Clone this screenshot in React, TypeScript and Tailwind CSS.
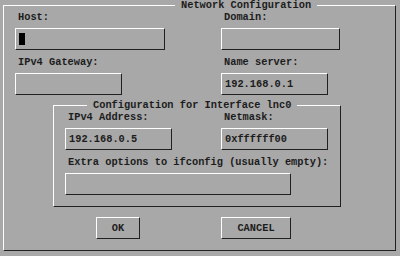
const mono = { fontFamily: '"Liberation Mono", "DejaVu Sans Mono", monospace' };

function Input({ width, value, cursor }: { width: string; value?: string; cursor?: boolean }) {
  return (
    <div
      className={[
        "flex h-[22px] items-center border border-t-white border-l-white border-r-[#202020] border-b-[#202020] pl-[3px]",
        width,
      ].join(" ")}
    >
      {cursor ? <span className="block h-[12px] w-[6px] bg-black" /> : value}
    </div>
  );
}

function Field({
  label,
  width,
  value,
  cursor,
}: {
  label: string;
  width: string;
  value?: string;
  cursor?: boolean;
}) {
  return (
    <div className="flex flex-col gap-[6px]">
      <div className="h-[10px] pl-[3px]">{label}</div>
      <Input width={width} value={value} cursor={cursor} />
    </div>
  );
}

function Button({ label, width }: { label: string; width: string }) {
  return (
    <button
      className={[
        "flex h-[22px] items-center justify-center border border-t-white border-l-white border-r-[#202020] border-b-[#202020]",
        width,
      ].join(" ")}
    >
      {label}
    </button>
  );
}

export default function App() {
  return (
    <div
      style={mono}
      className="h-[256px] w-[400px] overflow-hidden bg-[#a8a8a8] text-[10.33px] font-bold leading-[10px] text-[#1c1c1c]"
    >
      <fieldset className="ml-[3px] w-[393px] border border-t-white border-l-white border-r-[#202020] border-b-[#202020] pb-[11px]">
        <legend className="ml-[171px] px-[6px] leading-[10px]">Network Configuration</legend>

        <div className="grid grid-cols-[206px_1fr] gap-y-[7px] pt-[2px] pl-[11px]">
          <Field label="Host:" width="w-[150px]" cursor />
          <Field label="Domain:" width="w-[119px]" />
          <Field label="IPv4 Gateway:" width="w-[107px]" />
          <Field label="Name server:" width="w-[107px]" value="192.168.0.1" />
        </div>

        <fieldset className="mt-[5px] ml-[49px] w-[288px] border border-t-white border-l-white border-r-[#202020] border-b-[#202020] pb-[11px]">
          <legend className="ml-[33px] px-[6px] leading-[10px]">Configuration for Interface lnc0</legend>
          <div className="grid grid-cols-[156px_1fr] gap-y-[7px] pt-[2px] pl-[11px]">
            <Field label="IPv4 Address:" width="w-[107px]" value="192.168.0.5" />
            <Field label="Netmask:" width="w-[107px]" value="0xffffff00" />
            <div className="col-span-2">
              <Field label="Extra options to ifconfig (usually empty):" width="w-[226px]" />
            </div>
          </div>
        </fieldset>

        <div className="mt-[10px] ml-[92px] flex gap-[81px]">
          <Button label="OK" width="w-[44px]" />
          <Button label="CANCEL" width="w-[70px]" />
        </div>
      </fieldset>
    </div>
  );
}
